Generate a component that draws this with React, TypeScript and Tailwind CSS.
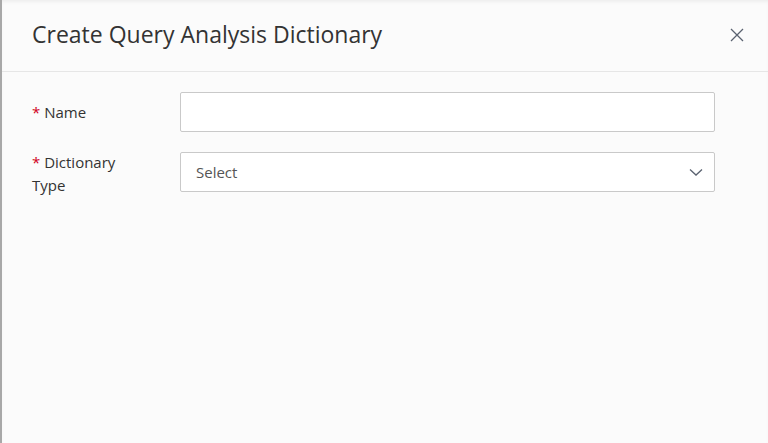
import React from "react";

export default function App() {
  return (
    <div
      className="w-[768px] h-[443px] bg-[#fbfbfb] border-l-2 border-[#a8a8a8] flex flex-col overflow-hidden shadow-[inset_0_3px_4px_-2px_rgba(0,0,0,0.08)]"
      style={{ fontFamily: '"Open Sans", "Noto Sans", sans-serif' }}
    >
      <div className="h-[72px] shrink-0 flex items-center justify-between pl-[30px] pr-[24px] border-b border-[#e6e6e6]">
        <h1 className="text-[23px] text-[#333] leading-none pb-[2px]">Create Query Analysis Dictionary</h1>
        <button className="w-[14px] h-[14px] flex items-center justify-center text-[#5a6270] mb-[2px]">
          <svg width="14" height="14" viewBox="0 0 14 14" fill="none" stroke="currentColor" strokeWidth="1.3">
            <path d="M1 1L13 13M13 1L1 13" />
          </svg>
        </button>
      </div>
      <div className="flex flex-col gap-[20px] pt-[20px] pl-[30px] pr-[53px]">
        <div className="flex items-center">
          <div className="w-[148px] text-[15px] text-[#333] leading-[23px]">
            <span className="text-[#d0021b]">*</span> Name
          </div>
          <div className="flex-1 h-[40px] border border-[#c9c9c9] rounded-[2px] bg-white" />
        </div>
        <div className="flex items-start">
          <div className="w-[148px] text-[15px] text-[#333] leading-[23px] pr-[44px] mt-[-1px]">
            <span className="text-[#d0021b]">*</span> Dictionary Type
          </div>
          <div className="flex-1 h-[40px] border border-[#c9c9c9] rounded-[2px] bg-white flex items-center justify-between pl-[15px] pr-[10px]">
            <span className="text-[15px] text-[#555]">Select</span>
            <svg width="16" height="16" viewBox="0 0 16 16" fill="none" stroke="#5a6270" strokeWidth="1.3">
              <path d="M2 5.5L8 11L14 5.5" />
            </svg>
          </div>
        </div>
      </div>
    </div>
  );
}
